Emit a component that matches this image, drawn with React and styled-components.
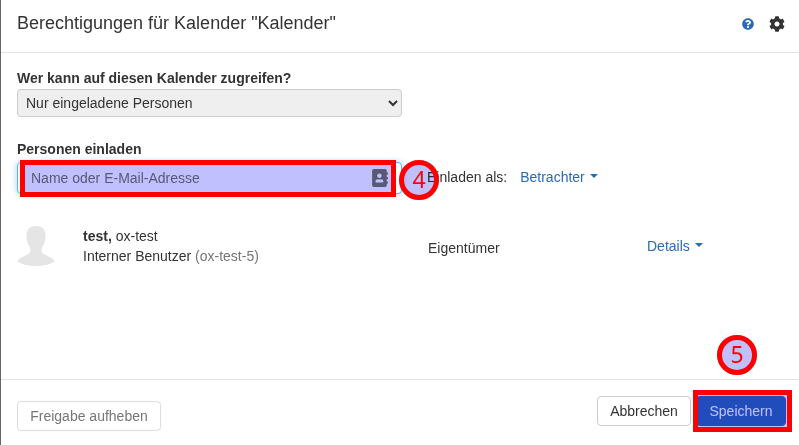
import React from 'react';
import styled, { createGlobalStyle } from 'styled-components';
import { FaQuestionCircle, FaCog, FaAddressBook } from 'react-icons/fa';

const GlobalStyle = createGlobalStyle`
    html, body {
        margin: 0;
        padding: 0;
        background: #fff;
    }
    * {
        box-sizing: border-box;
    }
`;

const Dialog = styled.div`
    position: relative;
    width: 799px;
    height: 445px;
    overflow: hidden;
    display: flex;
    flex-direction: column;
    background: #fff;
    border-left: 1px solid #666;
    font-family: "Liberation Sans", Arial, sans-serif;
    font-size: 14px;
    color: #333;
`;

const Header = styled.header`
    height: 53px;
    flex: none;
    display: flex;
    align-items: flex-start;
    justify-content: space-between;
    padding: 11px 14px 0 16px;
    border-bottom: 1px solid #e5e5e5;
`;

const Title = styled.h1`
    margin: 0;
    font-size: 18px;
    line-height: 24px;
    font-weight: 400;
`;

const HeaderIcons = styled.div`
    display: flex;
    align-items: center;
    gap: 15px;
    padding-top: 5px;
`;

const Body = styled.main`
    flex: 1;
    padding: 15px 0 0 16px;
`;

const Label = styled.label`
    display: block;
    font-weight: 700;
    line-height: 20px;
`;

const AccessSelect = styled.select`
    display: block;
    width: 385px;
    height: 28px;
    margin-top: 1px;
    padding: 0 4px;
    background: #efefef;
    border: 1px solid #ccc;
    border-radius: 4px;
    font: inherit;
    color: #333;
`;

const InviteLabel = styled(Label)`
    margin-top: 22px;
`;

const InviteRow = styled.div`
    display: grid;
    grid-template-columns: 410px auto;
    align-items: center;
    margin-top: 3px;
`;

const InputWrap = styled.div`
    position: relative;
    width: 385px;
    height: 32px;
`;

const NameInput = styled.input`
    width: 100%;
    height: 100%;
    padding: 0 34px 0 13px;
    border: 1px solid #66afe9;
    border-radius: 4px;
    box-shadow: 0 0 6px rgba(102, 175, 233, .6);
    font: inherit;
    color: #333;
    outline: none;

    &::placeholder {
        color: #767676;
        opacity: 1;
    }
`;

const BookIcon = styled(FaAddressBook)`
    position: absolute;
    right: 13px;
    top: 7px;
    color: #767676;
`;

const InviteAs = styled.div`
    display: flex;
    align-items: center;
    gap: 13px;
    margin-top: -3px;
`;

const DropLink = styled.a`
    display: inline-flex;
    align-items: center;
    color: #2a6ab8;
`;

const Caret = styled.span`
    width: 0;
    height: 0;
    margin: -2px 0 0 5px;
    border-top: 4.5px solid #2a6ab8;
    border-left: 4.5px solid transparent;
    border-right: 4.5px solid transparent;
`;

const PersonRow = styled.div`
    display: grid;
    grid-template-columns: 66px 345px 219px auto;
    align-items: center;
    margin-top: 32px;
`;

const PersonText = styled.div`
    line-height: 20px;
`;

const RoleCell = styled.div`
    margin-top: 4px;
`;

const Muted = styled.span`
    color: #767676;
`;

const Footer = styled.footer`
    height: 66px;
    flex: none;
    display: flex;
    align-items: flex-start;
    justify-content: space-between;
    padding: 16px 13px 0 16px;
    border-top: 1px solid #e5e5e5;
`;

const FooterRight = styled.div`
    display: flex;
    gap: 5px;
`;

const Button = styled.button`
    height: 30px;
    width: ${(p) => (p.$primary ? '90px' : '94px')};
    padding: 0;
    border: 1px solid ${(p) => (p.$primary ? '#2a66bb' : '#ccc')};
    border-radius: 4px;
    background: ${(p) => (p.$primary ? '#2a66bb' : '#fff')};
    color: ${(p) => (p.$primary ? '#fff' : '#333')};
    font: inherit;
`;

const UnshareButton = styled(Button)`
    margin-top: 5px;
    color: #767676;
    border-color: #ddd;
    width: 144px;
`;

// the tutorial markings lie over the dialog, tint multiplies what is below
const Tint = styled.div`
    position: absolute;
    mix-blend-mode: multiply;
    background: #c0c0ff;
    left: ${(p) => p.$x}px;
    top: ${(p) => p.$y}px;
    width: ${(p) => p.$w}px;
    height: ${(p) => p.$h}px;
    border-radius: ${(p) => (p.$round ? '50%' : '0')};
`;

const Frame = styled.div`
    position: absolute;
    border: 5px solid #f00;
    left: ${(p) => p.$x}px;
    top: ${(p) => p.$y}px;
    width: ${(p) => p.$w}px;
    height: ${(p) => p.$h}px;
`;

const Badge = styled.div`
    position: absolute;
    left: ${(p) => p.$x}px;
    top: ${(p) => p.$y}px;
    width: 40px;
    height: 40px;
    padding-bottom: 3px;
    display: flex;
    align-items: center;
    justify-content: center;
    border: 5px solid #f00;
    border-radius: 50%;
    color: #f00;
    font-family: "Noto Sans", sans-serif;
    font-size: 23px;
`;

const Avatar = () => (
    <svg width="38" height="40" viewBox="0 0 38 40">
        <path
            fill="#e5e5e5"
            d="M19 0c-6 0-9.500 3-9.500 10 0 5 1.500 9 3.500 12 .5 2 .5 4-1 5.500-3 2-9 4-12 7.500 4 3 11 5 19 5s15-2 19-5c-3-3.500-9-5.500-12-7.500-1.500-1.500-1.500-3.500-1-5.500 2-3 3.500-7 3.500-12 0-7-3.500-10-9.500-10z"
        />
    </svg>
);

const App = () => {
    return (
        <Dialog>
            <GlobalStyle />
            <Header>
                <Title>Berechtigungen für Kalender "Kalender"</Title>
                <HeaderIcons>
                    <FaQuestionCircle size={12} color="#2a6ab8" />
                    <FaCog size={16} color="#333" />
                </HeaderIcons>
            </Header>
            <Body>
                <Label>Wer kann auf diesen Kalender zugreifen?</Label>
                <AccessSelect defaultValue="invited">
                    <option value="invited">Nur eingeladene Personen</option>
                </AccessSelect>
                <InviteLabel>Personen einladen</InviteLabel>
                <InviteRow>
                    <InputWrap>
                        <NameInput placeholder="Name oder E-Mail-Adresse" />
                        <BookIcon size={18} />
                    </InputWrap>
                    <InviteAs>
                        Einladen als:
                        <DropLink>Betrachter<Caret /></DropLink>
                    </InviteAs>
                </InviteRow>
                <PersonRow>
                    <Avatar />
                    <PersonText>
                        <div><b>test,</b> ox-test</div>
                        <div>Interner Benutzer <Muted>(ox-test-5)</Muted></div>
                    </PersonText>
                    <RoleCell>Eigentümer</RoleCell>
                    <DropLink>Details<Caret /></DropLink>
                </PersonRow>
            </Body>
            <Footer>
                <UnshareButton>Freigabe aufheben</UnshareButton>
                <FooterRight>
                    <Button>Abbrechen</Button>
                    <Button $primary>Speichern</Button>
                </FooterRight>
            </Footer>

            <Tint $x={19} $y={160} $w={376} $h={37} />
            <Frame $x={19} $y={160} $w={376} $h={37} />
            <Tint $x={398} $y={160} $w={40} $h={40} $round />
            <Badge $x={398} $y={160}>4</Badge>
            <Tint $x={716} $y={335} $w={40} $h={40} $round />
            <Badge $x={716} $y={335}>5</Badge>
            <Tint $x={692} $y={390} $w={99} $h={42} />
            <Frame $x={692} $y={390} $w={99} $h={42} />
        </Dialog>
    );
};

export default App;
